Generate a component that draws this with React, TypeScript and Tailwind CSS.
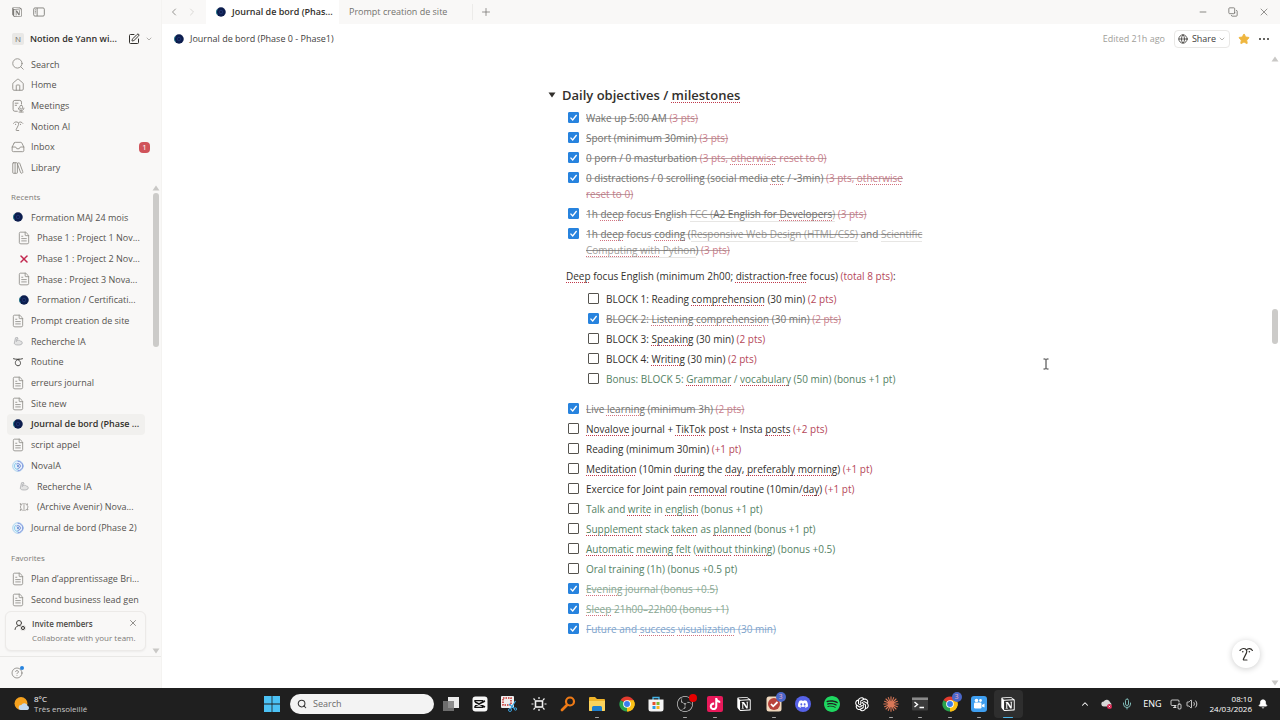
import React from "react";
import clsx from "clsx";
import {
  Bell,
  ChevronDown,
  ChevronLeft,
  ChevronRight,
  ChevronUp,
  CircleHelp,
  Copy,
  FileText,
  Globe,
  House,
  Inbox,
  LibraryBig,
  Mic,
  Minus,
  MonitorSmartphone,
  Plus,
  Search,
  SquarePen,
  Star,
  UserRoundCog,
  Volume2,
  X,
} from "lucide-react";
import { SiDiscord, SiNotion, SiObsstudio, SiSpotify, SiTiktok } from "react-icons/si";
import { AiOutlineOpenAI } from "react-icons/ai";

type IconProps = { className?: string };

/* ---------- Small drawings ---------- */

const FaceIcon = ({ className }: IconProps) => (
  <svg viewBox="0 0 20 20" className={className} fill="none" stroke="currentColor" strokeWidth="1.5" strokeLinecap="round" strokeLinejoin="round">
    <path d="M2.500 5.500C4.500 2.600 8.500 2.400 10.300 4.600c1 1.200.9 2.500.3 4L6.800 16.200c-.4.800 0 1.300.7 1.300h3.700" />
    <path d="M10.500 5c2-2.500 5.700-2.300 7.500.6" />
    <circle cx="6" cy="7.200" r="1" fill="currentColor" stroke="none" />
    <circle cx="14.200" cy="7.200" r="1" fill="currentColor" stroke="none" />
  </svg>
);

const MeetingsIcon = ({ className }: IconProps) => (
  <svg viewBox="0 0 20 20" className={className} fill="none" stroke="currentColor" strokeWidth="1.3" strokeLinecap="round">
    <path d="M9 17.500H5.500A2.500 2.500 0 0 1 3 15V4.500A2.500 2.500 0 0 1 5.500 2h7A2.500 2.500 0 0 1 15 4.500V7M6 6h4M6 9h2" />
    <rect x="12.500" y="9" width="4" height="5.500" rx="2" />
    <path d="M10.500 13c0 5 8 5 8 0M14.500 17v1.500M11.500 18.600h6" />
  </svg>
);

const SidebarToggleIcon = ({ className }: IconProps) => (
  <svg viewBox="0 0 20 16" className={className} fill="none" stroke="currentColor" strokeWidth="1.400">
    <rect x="1.500" y="1.500" width="17" height="13" rx="2" />
    <path d="M7 1.500v13M3.500 4.500h1.500M3.500 7h1.500M3.500 9.500h1.500" />
  </svg>
);

const NavyDot = ({ className }: IconProps) => (
  <svg viewBox="0 0 20 20" className={className}>
    <circle cx="10" cy="10" r="9.500" fill="#0c1d4e" />
    <path d="M3 4a9.500 9.500 0 0 0 0 12" stroke="#1f7f8f" strokeWidth="1.600" fill="none" />
    <circle cx="10" cy="10" r="3.500" fill="none" stroke="#274084" strokeWidth="1.200" />
  </svg>
);

const BlueSwirl = ({ className }: IconProps) => (
  <svg viewBox="0 0 20 20" className={className} fill="none" strokeLinecap="round">
    <circle cx="10" cy="10" r="9" fill="#e3f0fb" stroke="#9ccbea" strokeWidth="1.200" />
    <path d="M10 2a8 8 0 0 1 0 16" stroke="#7f8edb" strokeWidth="1.600" />
    <path d="M10 16a6 6 0 0 1-4-10.500" stroke="#7cc8e8" strokeWidth="1.400" />
    <path d="M8 6.500a4 4 0 1 1 2 7.500" stroke="#5f74c8" strokeWidth="1.500" />
    <circle cx="10" cy="10" r="1.500" fill="#4d76c9" />
  </svg>
);

const ArmIcon = ({ className }: IconProps) => (
  <svg viewBox="0 0 20 20" className={className} fill="#e3e3e3" stroke="#a3a5a7" strokeWidth="1.400" strokeLinejoin="round">
    <path d="M5 3.500 9 3l1 3-3 1-.5 4c2-3 6-3.500 8-1 2.500 0 4 1.500 4 4 0 3-4 4-8 4-5 0-7.500-1-8-3.500Z" />
  </svg>
);

const CurlIcon = ({ className }: IconProps) => (
  <svg viewBox="0 0 20 20" className={className} fill="none" stroke="#4a4946" strokeWidth="2" strokeLinecap="round">
    <path d="M1 3.500c4 1.500 14 1.500 18 0M12 4.500C2 5 3 17.500 10 17.500S17 7 9 5" />
  </svg>
);

const GearIcon = ({ className }: IconProps) => (
  <svg viewBox="0 0 20 20" className={className} fill="none" stroke="#8d8b87" strokeWidth="1.500" strokeLinejoin="round">
    <path d="m2 3 4 2 1.500-2L10 4.500 12.500 3 14 5l3-1.500-.5 4L18.500 10l-2 2 1.500 4-4-1-1.500 2-2.500-1.500L7.500 17 6 15l-4 2 2-4.500L2.500 10 4 7.500Z" />
    <path d="M8 8h4M8 12h4" />
  </svg>
);

const Triangle = ({ className }: IconProps) => (
  <svg viewBox="0 0 8 6" className={clsx("h-1.5 w-2", className)} fill="currentColor">
    <path d="M4 0.500 7.500 5.500H.5Z" />
  </svg>
);

const IBeam = ({ className }: IconProps) => (
  <svg viewBox="0 0 8 12" className={className} fill="none" stroke="#333" strokeWidth="1">
    <path d="M1.500 1h2l.5.500.5-.5h2M1.500 11h2l.5-.5.500.500h2M4 1.500v9" />
  </svg>
);

/* ---------- Sidebar ---------- */

type SidebarItem = { label: string; icon: React.ReactNode; nested?: boolean; active?: boolean; badge?: string };

const doc = <FileText className="size-3.5 text-[#91908c]" strokeWidth={1.5} />;
const navy = <NavyDot className="size-2.5" />;
const swirl = <BlueSwirl className="size-3" />;

const MENU: SidebarItem[] = [
  { label: "Search", icon: <Search className="size-3.5" strokeWidth={1.5} /> },
  { label: "Home", icon: <House className="size-3.5" strokeWidth={1.5} /> },
  { label: "Meetings", icon: <MeetingsIcon className="size-3.5" /> },
  { label: "Notion AI", icon: <FaceIcon className="size-3" /> },
  { label: "Inbox", icon: <Inbox className="size-3.5" strokeWidth={1.5} />, badge: "1" },
  { label: "Library", icon: <LibraryBig className="size-3.5" strokeWidth={1.5} /> },
];

const RECENTS: SidebarItem[] = [
  { label: "Formation MAJ 24 mois", icon: navy },
  { label: "Phase 1 : Project 1 Nov...", icon: doc, nested: true },
  { label: "Phase 1 : Project 2 Nov...", icon: <X className="size-3 text-[#c2274e]" strokeWidth={3} />, nested: true },
  { label: "Phase : Project 3 Nova...", icon: doc, nested: true },
  { label: "Formation / Certificati...", icon: navy, nested: true },
  { label: "Prompt creation de site", icon: doc },
  { label: "Recherche IA", icon: <ArmIcon className="size-2.5" /> },
  { label: "Routine", icon: <CurlIcon className="size-2.5" /> },
  { label: "erreurs journal", icon: doc },
  { label: "Site new", icon: doc },
  { label: "Journal de bord (Phase ...", icon: navy, active: true },
  { label: "script appel", icon: doc },
  { label: "NovaIA", icon: swirl },
  { label: "Recherche IA", icon: <ArmIcon className="size-2.5" />, nested: true },
  { label: "(Archive Avenir) Nova...", icon: <GearIcon className="size-2.5" />, nested: true },
  { label: "Journal de bord (Phase 2)", icon: swirl },
];

const FAVORITES: SidebarItem[] = [
  { label: "Plan d’apprentissage Bri...", icon: doc },
  { label: "Second business lead gen", icon: doc },
];

const SidebarRow = ({ label, icon, nested, active, badge }: SidebarItem) => (
  <a
    href="#"
    className={clsx(
      "flex min-h-0 flex-1 items-center gap-1.5 rounded text-nowrap font-medium",
      nested ? "pl-2.5" : "pl-1",
      active ? "bg-[#f1f0ee] font-semibold text-[#32302c]" : "text-[#55534f]",
    )}
  >
    <span className="flex w-3.5 shrink-0 justify-center text-[#8e8b86]">{icon}</span>
    {label}
    {badge && (
      <span className="mr-[-4px] ml-auto flex h-[11px] w-[11px] items-center justify-center rounded-sm bg-[#d0535a] text-[8px] text-white">
        {badge}
      </span>
    )}
  </a>
);

const SectionLabel = ({ children }: { children: React.ReactNode }) => (
  <h2 className="flex h-5 items-center pl-[11px] text-[8px] font-medium text-[#7d7b77]">{children}</h2>
);

const Sidebar = () => (
  <aside className="flex w-[162px] shrink-0 flex-col border-r border-[#f4f3f1] bg-[#f9f8f7] text-[9px]">
    <div className="flex h-6 shrink-0 items-center gap-2.5 pl-3 text-[#7d7b77]">
      <SiNotion className="size-2.5" />
      <button aria-label="Close sidebar">
        <SidebarToggleIcon className="h-2.5 w-3.5" />
      </button>
    </div>

    {/* Workspace switcher */}
    <div className="flex h-[30px] shrink-0 items-center pr-2 pl-3">
      <span className="flex size-3 items-center justify-center rounded-xs bg-[#e9e8e6] text-[8px] font-medium text-[#73726e]">N</span>
      <button className="ml-1.5 text-nowrap font-semibold text-[#32302c]">Notion de Yann wi...</button>
      <button aria-label="New page" className="ml-auto">
        <SquarePen className="size-3 text-[#32302c]" />
      </button>
      <ChevronDown className="ml-[5px] size-2 text-[#8e8b86]" />
    </div>

    <nav className="flex h-[124px] shrink-0 flex-col pr-[15px] pl-[7px]">
      {MENU.map((item) => (
        <SidebarRow key={item.label} {...item} />
      ))}
    </nav>

    {/* Scrolling part */}
    <div className="relative flex min-h-0 flex-1 overflow-hidden border-b border-[#e9e8e6]">
      <div className="min-w-0 flex-1 pt-[9px]">
        <SectionLabel>Recents</SectionLabel>
        <div className="flex h-[331px] flex-col pr-1.5 pl-[7px]">
          {RECENTS.map((item, i) => (
            <SidebarRow key={i} {...item} />
          ))}
        </div>
        <div className="mt-2.5">
          <SectionLabel>Favorites</SectionLabel>
        </div>
        <div className="flex h-[42px] flex-col pr-1.5 pl-[7px]">
          {FAVORITES.map((item) => (
            <SidebarRow key={item.label} {...item} />
          ))}
        </div>
      </div>
      <div className="flex w-2.5 flex-col items-center pt-[7px] pb-0.5 text-[#c9c8c6]">
        <Triangle />
        <div className="mt-0.5 h-[154px] w-1.5 rounded-full bg-[#cccbc9]" />
        <Triangle className="mt-auto rotate-180" />
      </div>
      <div className="absolute bottom-[5px] left-[5px] flex h-10 w-[141px] rounded-md border border-[#eceae8] bg-[#f9f8f7] pt-[5px] pl-2 shadow-xs">
        <UserRoundCog className="mt-0.5 size-3 text-[#4b4945]" />
        <div className="ml-1.5 text-nowrap text-[8px] leading-[14px]">
          <p className="font-semibold text-[#4b4945]">Invite members</p>
          <p className="text-[#7d7b77]">Collaborate with your team.</p>
        </div>
        <button aria-label="Dismiss" className="absolute top-1.5 right-[7px]">
          <X className="size-2.5 text-[#7d7b77]" />
        </button>
      </div>
    </div>

    <div className="flex h-[31px] shrink-0 items-center pl-[11px]">
      <button aria-label="Help" className="relative">
        <CircleHelp className="size-3 text-[#7d7b77]" strokeWidth={1.5} />
        <span className="absolute -top-px -right-px size-1 rounded-full bg-[#2783de]" />
      </button>
    </div>
  </aside>
);

/* ---------- Window chrome ---------- */

const TabBar = () => (
  <div className="flex h-6 shrink-0 items-center bg-[#f9f8f7] text-[9px] text-[#73726e]">
    <button aria-label="Back" className="ml-1.5">
      <ChevronLeft className="size-3" strokeWidth={1.5} />
    </button>
    <button aria-label="Forward" className="ml-1.5">
      <ChevronRight className="size-3 text-[#cfcdca]" strokeWidth={1.5} />
    </button>
    <div className="ml-2 flex h-full w-[133px] items-center gap-1.5 bg-white pl-2.5 text-nowrap font-semibold text-[#32302c]">
      <NavyDot className="size-2.5" />
      Journal de bord (Phas...
    </div>
    <div className="flex h-full w-[133px] items-center pl-2.5 text-nowrap font-medium">Prompt creation de site</div>
    <div className="h-4 w-px bg-[#ecebe9]" />
    <button aria-label="New tab" className="ml-[7px]">
      <Plus className="size-3" strokeWidth={1.5} />
    </button>
    <div className="mr-2.5 ml-auto flex items-center gap-5">
      <button aria-label="Minimize"><Minus className="size-2.5" strokeWidth={2} /></button>
      <button aria-label="Restore"><Copy className="size-2.5 -scale-x-100 rotate-90" strokeWidth={2} /></button>
      <button aria-label="Close"><X className="size-3" strokeWidth={1.5} /></button>
    </div>
  </div>
);

const TopBar = () => (
  <header className="flex h-[30px] shrink-0 items-center pr-[11px] pl-3 text-[9px]">
    <NavyDot className="size-2.5" />
    <span className="ml-1.5 text-nowrap text-[#42403c]">Journal de bord (Phase 0 - Phase1)</span>
    <span className="ml-auto text-[#a09e9a]">Edited 21h ago</span>
    <button className="ml-[9px] flex h-[18px] w-14 items-center justify-center rounded border border-[#e9e8e6] font-medium text-[#42403c]">
      <Globe className="size-2.5" />
      <span className="mr-0.5 ml-1">Share</span>
      <ChevronDown className="size-2 text-[#8e8b86]" />
    </button>
    <button aria-label="Favorite" className="ml-2">
      <Star className="size-3 fill-[#efb63e] text-[#efb63e]" />
    </button>
    <button aria-label="More" className="ml-[9px] flex gap-0.5">
      <i className="size-0.5 rounded-full bg-[#32302c]" />
      <i className="size-0.5 rounded-full bg-[#32302c]" />
      <i className="size-0.5 rounded-full bg-[#32302c]" />
    </button>
  </header>
);

/* ---------- Document ---------- */

// Word flagged by the spell checker
const Sp = ({ children }: { children: React.ReactNode }) => (
  <span className="underline decoration-[#c0394b] decoration-dotted decoration-1 underline-offset-2 [text-decoration-skip-ink:none]">
    {children}
  </span>
);

const Pts = ({ children }: { children: React.ReactNode }) => (
  <span className="text-[#b5485a] decoration-[#b5485a]/40 group-data-[done=true]:line-through">{children}</span>
);

const DocLink = ({ children }: { children: React.ReactNode }) => (
  <a href="#" className="border-b border-[#dddcda] text-[#7d7a75]">
    {children}
  </a>
);

interface TodoProps {
  checked?: boolean;
  color?: "green" | "blue";
  children: React.ReactNode;
}

const Todo = ({ checked, color, children }: TodoProps) => (
  <label className="group flex gap-[7px] py-0.5" data-done={!!checked}>
    <span className="relative mt-0.5 size-[11px] shrink-0">
      <input
        type="checkbox"
        defaultChecked={checked}
        className="peer block size-[11px] appearance-none rounded-[1px] border border-[#55534e] checked:border-[#2783de] checked:bg-[#2783de]"
      />
      <svg viewBox="0 0 11 11" className="pointer-events-none absolute inset-0 hidden peer-checked:block" fill="none" stroke="#fff" strokeWidth="1.300">
        <path d="M2.500 5.600 4.700 8 8.600 3" />
      </svg>
    </span>
    <span
      className={clsx(
        color === "green" && "text-[#548164] decoration-[#548164]/60",
        color === "blue" && "text-[#487cb5] decoration-[#487cb5]/60",
        !color && "decoration-[#32302c]/50",
        checked && "line-through opacity-70",
      )}
    >
      {children}
    </span>
  </label>
);

const Page = () => (
  <main className="relative min-h-0 flex-1 overflow-hidden">
    <div className="mx-auto max-w-[430px] pt-[31px] pr-2 pl-[42px] text-[10px] leading-4 text-[#32302c]">
      <h1 className="flex items-center text-[13px] leading-5 font-semibold">
        <Triangle className="mr-1.5 rotate-180" />
        <span>
          Daily objectives / <Sp>milestones</Sp>
        </span>
      </h1>

      <div className="mt-[3px] pl-5">
        <Todo checked>Wake up 5:00 AM <Pts>(3 pts)</Pts></Todo>
        <Todo checked>Sport (minimum 30min) <Pts>(3 pts)</Pts></Todo>
        <Todo checked>0 porn / 0 masturbation <Pts>(3 pts, <Sp>otherwise</Sp> reset to 0)</Pts></Todo>
        <Todo checked>
          0 distractions / 0 scrolling (social media <Sp>etc</Sp> / -3min) <Pts>(3 pts, <Sp>otherwise</Sp> reset to 0)</Pts>
        </Todo>
        <Todo checked>
          1h <Sp>deep</Sp> focus English{" "}
          <DocLink>FCC (<span className="text-[#32302c]">A2 English for <Sp>Developers</Sp></span>)</DocLink> <Pts>(3 pts)</Pts>
        </Todo>
        <Todo checked>
          1h <Sp>deep</Sp> focus <Sp>coding</Sp> (<DocLink>Responsive Web Design (HTML/CSS)</DocLink> and{" "}
          <DocLink>Scientific <Sp>Computing with</Sp> Python</DocLink>) <Pts>(3 pts)</Pts>
        </Todo>
      </div>

      <p className="mt-2 pl-[18px]">
        <Sp>Deep</Sp> focus English (minimum 2h00; <Sp>distraction-free</Sp> focus) <Pts>(total 8 pts)</Pts>:
      </p>

      <div className="mt-[5px] pl-10">
        <Todo>BLOCK 1: Reading <Sp>comprehension</Sp> (30 min) <Pts>(2 pts)</Pts></Todo>
        <Todo checked>BLOCK 2: <Sp>Listening</Sp> <Sp>comprehension</Sp> (30 min) <Pts>(2 pts)</Pts></Todo>
        <Todo>BLOCK 3: <Sp>Speaking</Sp> (30 min) <Pts>(2 pts)</Pts></Todo>
        <Todo>BLOCK 4: <Sp>Writing</Sp> (30 min) <Pts>(2 pts)</Pts></Todo>
        <Todo color="green">Bonus: BLOCK 5: <Sp>Grammar</Sp> / <Sp>vocabulary</Sp> (50 min) (bonus +1 pt)</Todo>
      </div>

      <div className="mt-2.5 pl-5">
        <Todo checked>Live <Sp>learning</Sp> (minimum 3h) <Pts>(2 pts)</Pts></Todo>
        <Todo><Sp>Novalove</Sp> journal + <Sp>TikTok</Sp> post + Insta <Sp>posts</Sp> <Pts>(+2 pts)</Pts></Todo>
        <Todo>Reading (minimum 30min) <Pts>(+1 pt)</Pts></Todo>
        <Todo>
          <Sp>Meditation</Sp> (10min <Sp>during</Sp> the <Sp>day</Sp>, <Sp>preferably</Sp> <Sp>morning</Sp>) <Pts>(+1 pt)</Pts>
        </Todo>
        <Todo>Exercice for Joint pain <Sp>removal</Sp> routine (10min/<Sp>day</Sp>) <Pts>(+1 pt)</Pts></Todo>
        <Todo color="green">Talk and <Sp>write</Sp> in <Sp>english</Sp> (bonus +1 pt)</Todo>
        <Todo color="green"><Sp>Supplement</Sp> stack <Sp>taken</Sp> as <Sp>planned</Sp> (bonus +1 pt)</Todo>
        <Todo color="green">
          <Sp>Automatic</Sp> <Sp>mewing</Sp> <Sp>felt</Sp> (<Sp>without</Sp> <Sp>thinking</Sp>) (bonus +0.5)
        </Todo>
        <Todo color="green">Oral training (1h) (bonus +0.5 pt)</Todo>
        <Todo checked color="green"><Sp>Evening</Sp> journal (bonus +0.5)</Todo>
        <Todo checked color="green"><Sp>Sleep</Sp> 21h00–22h00 (bonus +1)</Todo>
        <Todo checked color="blue">Future and <Sp>success</Sp> <Sp>visualization</Sp> (30 min)</Todo>
      </div>
    </div>

    {/* Page scrollbar, pointer and assistant button float over the page */}
    <div className="absolute inset-y-0 right-0 flex w-2.5 flex-col items-center py-0.5 text-[#c9c8c6]">
      <Triangle />
      <div className="mt-[247px] h-[35px] w-1.5 rounded-full bg-[#cccbc9]" />
      <Triangle className="mt-auto rotate-180" />
    </div>
    <IBeam className="absolute top-[304px] right-[230px] h-3 w-2" />
    <button
      aria-label="Notion AI"
      className="absolute right-5 bottom-5 flex size-7 items-center justify-center rounded-full bg-white shadow-[0_1px_6px_rgba(0,0,0,0.2)]"
    >
      <FaceIcon className="size-4 text-[#32302c]" />
    </button>
  </main>
);

/* ---------- Taskbar ---------- */

const ChromeIcon = () => (
  <svg viewBox="0 0 20 20" className="size-4">
    <path d="M10 10 1.800 5.200A9.500 9.500 0 0 1 18.200 5.200Z" fill="#e33b2e" />
    <path d="M10 10 18.200 5.200A9.500 9.500 0 0 1 10 19.500Z" fill="#fbc116" />
    <path d="M10 10v9.500A9.500 9.500 0 0 1 1.800 5.200Z" fill="#2aa24c" />
    <path d="M10 5.200h8.200a9.500 9.500 0 0 1-8.200 14.300l4-7Z" fill="#fbc116" />
    <circle cx="10" cy="10" r="4.800" fill="#fff" />
    <circle cx="10" cy="10" r="3.700" fill="#3b7ded" />
  </svg>
);

const NotionTile = () => (
  <span className="flex size-4 items-center justify-center rounded-xs">
    <SiNotion className="size-3.5 text-white" />
  </span>
);

const CountBadge = () => (
  <span className="absolute -top-1 -right-1 flex size-2.5 items-center justify-center rounded-full bg-[#4a67c9] text-[7px] text-[#f0aac0]">
    3
  </span>
);

interface TaskApp {
  name: string;
  icon: React.ReactNode;
  running?: boolean;
  active?: boolean;
}

const APPS: TaskApp[] = [
  {
    name: "Task view",
    icon: (
      <svg viewBox="0 0 16 16" className="size-4">
        <rect x="5" y="1" width="11" height="11" fill="#ececec" />
        <rect x="0" y="5" width="11" height="10" fill="#7d7d7d" opacity=".85" />
      </svg>
    ),
  },
  {
    name: "CapCut",
    icon: (
      <svg viewBox="0 0 16 16" className="size-4">
        <rect x=".5" y=".5" width="15" height="15" rx="3" fill="#f6f6f6" />
        <path d="M3 6V4.600h7.500V6L13 4.800M3 10v1.400h7.500V10l2.500 1.200M3 6l10 5M3 10l10-5" fill="none" stroke="#111" strokeWidth="1.400" />
      </svg>
    ),
  },
  {
    name: "Snipping Tool",
    icon: (
      <svg viewBox="0 0 16 16" className="size-4">
        <rect x="0" y="0" width="13" height="12" rx="1" fill="#eeeeee" />
        <rect x="2" y="2" width="8" height="7" fill="none" stroke="#c9302c" strokeWidth="1.500" strokeDasharray="1.500 1" />
        <path d="m14.500 5-5 8M8 8l6 5" stroke="#3aa0dc" strokeWidth="1.300" />
        <circle cx="9" cy="14" r="1.500" fill="none" stroke="#3aa0dc" />
        <circle cx="14.500" cy="13" r="1.200" fill="none" stroke="#3aa0dc" />
      </svg>
    ),
  },
  {
    name: "Brightness",
    icon: (
      <svg viewBox="0 0 16 16" className="size-4" fill="none" stroke="#f1f1f1" strokeWidth="1.200">
        <rect x="4.500" y="5" width="7" height="6" strokeWidth="1.600" />
        <path d="M8 1v2M8 13v2M.5 8h2M13.500 8h2M2.500 2.500 4 4M12 4l1.500-1.500M2.500 13.500 4 12M12 12l1.500 1.500" />
      </svg>
    ),
  },
  {
    name: "Everything",
    icon: (
      <svg viewBox="0 0 16 16" className="size-4" fill="none" stroke="#ee7a16" strokeLinecap="round">
        <circle cx="10" cy="5.500" r="4" strokeWidth="2.200" />
        <path d="m7 9-5 5" strokeWidth="2.800" />
      </svg>
    ),
  },
  {
    name: "Explorer",
    running: true,
    icon: (
      <svg viewBox="0 0 16 16" className="size-4">
        <path d="M0 2a1 1 0 0 1 1-1h5l2 2h7a1 1 0 0 1 1 1v10a1 1 0 0 1-1 1H1a1 1 0 0 1-1-1Z" fill="#f0b429" />
        <path d="M0 5h16v9a1 1 0 0 1-1 1H1a1 1 0 0 1-1-1Z" fill="#fbd35c" />
        <path d="M3 15v-3.500a1.500 1.500 0 0 1 1.500-1.500h7a1.500 1.500 0 0 1 1.500 1.500V15Z" fill="#1f7fce" />
      </svg>
    ),
  },
  { name: "Chrome", icon: <ChromeIcon /> },
  {
    name: "Microsoft Store",
    icon: (
      <svg viewBox="0 0 16 16" className="size-4">
        <path d="M5 4V1.500h6V4" fill="none" stroke="#45b4e8" strokeWidth="1.300" />
        <path d="M.5 3.500h15V13a2.500 2.500 0 0 1-2.500 2.500H3A2.500 2.500 0 0 1 .5 13Z" fill="#f4f4f4" />
        <rect x="4.500" y="6" width="3" height="3" fill="#e5502b" />
        <rect x="8.500" y="6" width="3" height="3" fill="#7db72f" />
        <rect x="4.500" y="10" width="3" height="3" fill="#2a9be0" />
        <rect x="8.500" y="10" width="3" height="3" fill="#f5b61e" />
      </svg>
    ),
  },
  {
    name: "OBS",
    running: true,
    icon: (
      <>
        <SiObsstudio className="size-4 text-[#c8c8c8]" />
        <span className="absolute -top-0.5 -right-1 size-2 rounded-full bg-[#e60000]" />
      </>
    ),
  },
  {
    name: "TikTok",
    running: true,
    icon: (
      <span className="flex size-4 items-center justify-center rounded-xs bg-[#e8195a]">
        <SiTiktok className="size-3 text-white" />
      </span>
    ),
  },
  { name: "Notion Calendar", icon: <NotionTile /> },
  {
    name: "Tasks",
    running: true,
    icon: (
      <>
        <svg viewBox="0 0 16 16" className="size-4">
          <rect x=".5" y=".5" width="15" height="15" rx="2.500" fill="#f0d8bd" />
          <circle cx="8" cy="8" r="6" fill="#b8433b" />
          <path d="m5 8 2.200 2.300L11.500 6" fill="none" stroke="#fff" strokeWidth="1.800" />
        </svg>
        <CountBadge />
      </>
    ),
  },
  {
    name: "Discord",
    icon: (
      <span className="flex size-4 items-center justify-center rounded-full bg-[#5662e8]">
        <SiDiscord className="size-2.5 text-white" />
      </span>
    ),
  },
  { name: "Spotify", icon: <SiSpotify className="size-4 text-[#1ed760]" /> },
  { name: "ChatGPT", icon: <AiOutlineOpenAI className="size-[18px] text-white" /> },
  {
    name: "Claude",
    running: true,
    icon: (
      <svg viewBox="0 0 16 16" className="size-4" stroke="#d97757" strokeWidth="1.100" strokeLinecap="round">
        <path d="M8 .8v14.400M.8 8h14.400M3 3l10 10M13 3 3 13M5.300 1.600l5.400 12.800M10.700 1.600 5.300 14.400M1.600 5.300l12.800 5.400M14.400 5.300 1.600 10.700" />
      </svg>
    ),
  },
  {
    name: "Terminal",
    running: true,
    icon: (
      <svg viewBox="0 0 16 16" className="size-4">
        <rect y="1.500" width="16" height="13" rx="1" fill="#3c3c3c" />
        <rect y="1.500" width="16" height="2.500" fill="#8a8a8a" />
        <path d="m2.500 6 3 2.500-3 2.500M7.500 11.500H12" fill="none" stroke="#fff" strokeWidth="1.400" />
      </svg>
    ),
  },
  {
    name: "Chrome profile",
    running: true,
    icon: (
      <>
        <ChromeIcon />
        <CountBadge />
      </>
    ),
  },
  {
    name: "Recorder",
    running: true,
    icon: (
      <svg viewBox="0 0 16 16" className="size-4">
        <rect width="16" height="16" rx="3" fill="#3f9ff0" />
        <circle cx="5.500" cy="4.500" r="1.800" fill="#fff" />
        <circle cx="9.500" cy="4.500" r="1.400" fill="#fff" />
        <rect x="3" y="6.500" width="7.500" height="6" rx="1.200" fill="#fff" />
        <path d="m11 9 2.500-1.500v4L11 10.500Z" fill="#fff" />
      </svg>
    ),
  },
  { name: "Notion", icon: <NotionTile />, active: true },
];

const Taskbar = () => (
  <footer className="flex h-8 shrink-0 items-stretch bg-[#1f1f1f] text-[9px] text-white">
    <div className="flex flex-1 items-center gap-1 pl-3.5">
      <svg viewBox="0 0 16 16" className="size-4">
        <circle cx="7" cy="7.500" r="6.500" fill="#f5a11e" />
        <path d="M7 14a2.500 2.500 0 0 1 .3-5 3.300 3.300 0 0 1 6.200.8A2.200 2.200 0 0 1 13.500 14Z" fill="#c4d9ee" />
      </svg>
      <div className="text-[8px] leading-[10px] text-nowrap">
        <p>8°C</p>
        <p className="text-[#c8c8c8]">Très ensoleillé</p>
      </div>
    </div>

    <div className="flex items-center pl-[3px]">
      <button aria-label="Start" className="flex w-5 justify-center">
        <svg viewBox="0 0 16 16" className="size-4" fill="#4cc2f5">
          <path d="M0 0h7.600v7.600H0zM8.400 0H16v7.600H8.400zM0 8.400h7.600V16H0zM8.400 8.400H16V16H8.400z" />
        </svg>
      </button>
      <label className="mr-0.5 ml-2 flex h-5 w-36 items-center gap-1.5 rounded-full bg-[#f3f3f3] px-[7px]">
        <Search className="size-2.5 shrink-0 text-[#333]" strokeWidth={2.5} />
        <input type="text" aria-label="Search" placeholder="Search" className="w-full bg-transparent text-[9px] outline-none placeholder:text-[#6b6b6b]" />
      </label>
      <div className="grid w-[587px] grid-cols-20 self-stretch">
        {APPS.map((app) => (
          <button
            key={app.name}
            aria-label={app.name}
            className={clsx("relative flex items-center justify-center", app.active && "my-0.5 rounded bg-[#2e2e2e]")}
          >
            <span className="relative">{app.icon}</span>
            {app.running && <span className="absolute bottom-0.5 h-px w-1 rounded-full bg-[#a5a5a5]" />}
            {app.active && <span className="absolute bottom-0 h-px w-2.5 rounded-full bg-[#4cb5e8]" />}
          </button>
        ))}
      </div>
    </div>

    <div className="flex flex-1 items-center justify-end pr-3">
      <ChevronUp className="size-2.5" strokeWidth={2.500} />
      <svg viewBox="0 0 12 12" className="ml-[11px] size-3">
        <path d="M3 8.500a2.500 2.500 0 0 1-.3-5 3.500 3.500 0 0 1 6.500 1A2.200 2.200 0 0 1 9 8.500Z" fill="#d8d8d8" />
        <circle cx="8.500" cy="8.500" r="2.500" fill="#d1244e" />
        <path d="m7.700 7.700 1.600 1.600m0-1.600-1.600 1.600" stroke="#fff" strokeWidth=".7" />
      </svg>
      <Mic className="ml-2 size-3 text-[#7fb8b5]" />
      <span className="ml-2.5">ENG</span>
      <MonitorSmartphone className="ml-2 size-3" strokeWidth={1.500} />
      <Volume2 className="ml-1 size-3" strokeWidth={1.500} />
      <div className="ml-3 text-right text-[8px] leading-[10px]">
        <p>08:10</p>
        <p>24/03/2026</p>
      </div>
      <Bell className="ml-1.5 size-2.5 fill-white" />
    </div>
  </footer>
);

export default function App() {
  return (
    <div className="flex h-screen flex-col overflow-hidden bg-white font-['Open_Sans',sans-serif]">
      <div className="flex min-h-0 flex-1">
        <Sidebar />
        <div className="flex min-w-0 flex-1 flex-col">
          <TabBar />
          <TopBar />
          <Page />
        </div>
      </div>
      <Taskbar />
    </div>
  );
}
